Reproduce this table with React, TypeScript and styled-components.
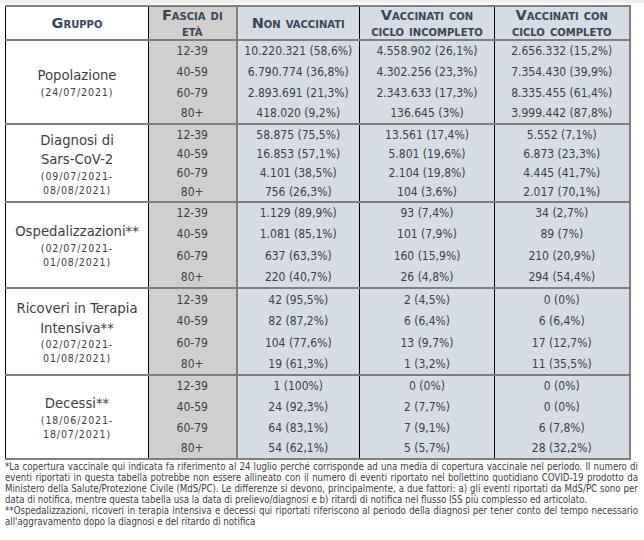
import React from 'react';
import styled, { createGlobalStyle } from 'styled-components';

const Global = createGlobalStyle`
  html, body { margin: 0; padding: 0; background: #ffffff; }
  body { font-family: "DejaVu Sans Condensed", "DejaVu Sans", sans-serif; color: #3e4044; }
`;

const Page = styled.div`
  width: 644px;
  height: 540px;
  overflow: hidden;
  display: flex;
  flex-direction: column;
`;

const TopStrip = styled.div`
  height: 3px;
  background: #efefef;
`;

const Content = styled.div`
  padding: 2px 0 0 5px;
  display: flex;
  flex-direction: column;
`;

const Table = styled.table`
  border-collapse: collapse;
  table-layout: fixed;
  width: 624px;
  border-top: 2px solid #7f7f7f;
  border-left: 1px solid #000000;
  border-right: 2px solid #7f7f7f;
  border-bottom: 2px solid #7f7f7f;
`;

type Kind = 'group' | 'age' | 'value' | 'last';

const bgOf = (k: Kind) => (k === 'group' ? '#ffffff' : k === 'age' ? '#d0cecf' : '#d6dce4');
const rightOf = (k: Kind) =>
  k === 'age' ? '2px solid #7f7f7f' : k === 'last' ? 'none' : '1px solid #000000';

const HeadCell = styled.th<{ $kind: Kind }>`
  background: ${(p) => bgOf(p.$kind)};
  border-right: ${(p) => rightOf(p.$kind)};
  border-bottom: 2px solid #7f7f7f;
  font-family: "DejaVu Sans", sans-serif;
  font-weight: bold;
  font-variant: small-caps;
  font-size: 14.5px;
  line-height: 16px;
  color: #3a4756;
  text-align: center;
  vertical-align: middle;
  padding: 0;
  height: 32px;
`;

const GroupBody = styled.tbody`
  border-top: 2px solid #7f7f7f;
`;

const Row = styled.tr<{ $h: number }>`
  height: ${(p) => p.$h}px;
`;

const LabelCell = styled.td`
  background: #ffffff;
  border-right: 1px solid #000000;
  text-align: center;
  vertical-align: middle;
  padding: 0 3px;
`;

const Title = styled.div`
  font-size: 14.7px;
  line-height: 19.5px;
  color: #3e4044;
`;

const Dates = styled.div`
  font-size: 10.5px;
  line-height: 14px;
  letter-spacing: 0.9px;
  color: #3e4044;
`;

const DataCell = styled.td<{ $kind: Kind }>`
  background: ${(p) => bgOf(p.$kind)};
  border-right: ${(p) => rightOf(p.$kind)};
  font-size: 12px;
  line-height: 14px;
  text-align: center;
  vertical-align: middle;
  padding: 0;
  white-space: nowrap;
  color: #3e4044;
`;

const Notes = styled.div`
  width: 633px;
  padding-top: 1px;
  font-size: 9.6px;
  line-height: 11px;
  color: #3e4044;
`;

const JustLine = styled.div`
  display: flex;
  justify-content: space-between;
  white-space: nowrap;
`;

const PlainLine = styled.div`
  white-space: nowrap;
`;

type Group = {
  title: string[];
  dates: string[];
  heights: number[];
  rows: string[][];
};

const groups: Group[] = [
  {
    title: ['Popolazione'],
    dates: ['(24/07/2021)'],
    heights: [21, 21, 21, 21],
    rows: [
      ['12-39', '10.220.321 (58,6%)', '4.558.902 (26,1%)', '2.656.332 (15,2%)'],
      ['40-59', '6.790.774 (36,8%)', '4.302.256 (23,3%)', '7.354.430 (39,9%)'],
      ['60-79', '2.893.691 (21,3%)', '2.343.633 (17,3%)', '8.335.455 (61,4%)'],
      ['80+', '418.020 (9,2%)', '136.645 (3%)', '3.999.442 (87,8%)'],
    ],
  },
  {
    title: ['Diagnosi di', 'Sars-CoV-2'],
    dates: ['(09/07/2021-', '08/08/2021)'],
    heights: [20, 19, 20, 19],
    rows: [
      ['12-39', '58.875 (75,5%)', '13.561 (17,4%)', '5.552 (7,1%)'],
      ['40-59', '16.853 (57,1%)', '5.801 (19,6%)', '6.873 (23,3%)'],
      ['60-79', '4.101 (38,5%)', '2.104 (19,8%)', '4.445 (41,7%)'],
      ['80+', '756 (26,3%)', '104 (3,6%)', '2.017 (70,1%)'],
    ],
  },
  {
    title: ['Ospedalizzazioni**'],
    dates: ['(02/07/2021-', '01/08/2021)'],
    heights: [21, 22, 21, 22],
    rows: [
      ['12-39', '1.129 (89,9%)', '93 (7,4%)', '34 (2,7%)'],
      ['40-59', '1.081 (85,1%)', '101 (7,9%)', '89 (7%)'],
      ['60-79', '637 (63,3%)', '160 (15,9%)', '210 (20,9%)'],
      ['80+', '220 (40,7%)', '26 (4,8%)', '294 (54,4%)'],
    ],
  },
  {
    title: ['Ricoveri in Terapia', 'Intensiva**'],
    dates: ['(02/07/2021-', '01/08/2021)'],
    heights: [22, 22, 21, 22],
    rows: [
      ['12-39', '42 (95,5%)', '2 (4,5%)', '0 (0%)'],
      ['40-59', '82 (87,2%)', '6 (6,4%)', '6 (6,4%)'],
      ['60-79', '104 (77,6%)', '13 (9,7%)', '17 (12,7%)'],
      ['80+', '19 (61,3%)', '1 (3,2%)', '11 (35,5%)'],
    ],
  },
  {
    title: ['Decessi**'],
    dates: ['(18/06/2021-', '18/07/2021)'],
    heights: [21, 21, 21, 21],
    rows: [
      ['12-39', '1 (100%)', '0 (0%)', '0 (0%)'],
      ['40-59', '24 (92,3%)', '2 (7,7%)', '0 (0%)'],
      ['60-79', '64 (83,1%)', '7 (9,1%)', '6 (7,8%)'],
      ['80+', '54 (62,1%)', '5 (5,7%)', '28 (32,2%)'],
    ],
  },
];

const notes: { text: string; justify: boolean }[] = [
  {
    text: '*La copertura vaccinale qui indicata fa riferimento al 24 luglio perché corrisponde ad una media di copertura vaccinale nel periodo. Il numero di',
    justify: true,
  },
  {
    text: 'eventi riportati in questa tabella potrebbe non essere allineato con il numero di eventi riportato nel bollettino quotidiano COVID-19 prodotto da',
    justify: true,
  },
  {
    text: 'Ministero della Salute/Protezione Civile (MdS/PC). Le differenze si devono, principalmente, a due fattori: a) gli eventi riportati da MdS/PC sono per',
    justify: true,
  },
  {
    text: 'data di notifica, mentre questa tabella usa la data di prelievo/diagnosi e b) ritardi di notifica nel flusso ISS più complesso ed articolato.',
    justify: false,
  },
  {
    text: '**Ospedalizzazioni, ricoveri in terapia intensiva e decessi qui riportati riferiscono al periodo della diagnosi per tener conto del tempo necessario',
    justify: true,
  },
  {
    text: "all'aggravamento dopo la diagnosi e del ritardo di notifica",
    justify: false,
  },
];

const valueKinds: Kind[] = ['age', 'value', 'value', 'last'];

export default function App() {
  return (
    <Page>
      <Global />
      <TopStrip />
      <Content>
        <Table>
          <colgroup>
            <col style={{ width: 143 }} />
            <col style={{ width: 88 }} />
            <col style={{ width: 123 }} />
            <col style={{ width: 135 }} />
            <col style={{ width: 135 }} />
          </colgroup>
          <thead>
            <tr>
              <HeadCell $kind="group">Gruppo</HeadCell>
              <HeadCell $kind="age">
                Fascia di
                <br />
                età
              </HeadCell>
              <HeadCell $kind="value">Non vaccinati</HeadCell>
              <HeadCell $kind="value">
                Vaccinati con
                <br />
                ciclo incompleto
              </HeadCell>
              <HeadCell $kind="last">
                Vaccinati con
                <br />
                ciclo completo
              </HeadCell>
            </tr>
          </thead>
          {groups.map((g, gi) => (
            <GroupBody key={gi}>
              {g.rows.map((r, ri) => (
                <Row key={ri} $h={g.heights[ri]}>
                  {ri === 0 && (
                    <LabelCell rowSpan={4}>
                      {g.title.map((t) => (
                        <Title key={t}>{t}</Title>
                      ))}
                      {g.dates.map((d) => (
                        <Dates key={d}>{d}</Dates>
                      ))}
                    </LabelCell>
                  )}
                  {r.map((v, vi) => (
                    <DataCell key={vi} $kind={valueKinds[vi]}>
                      {v}
                    </DataCell>
                  ))}
                </Row>
              ))}
            </GroupBody>
          ))}
        </Table>
        <Notes>
          {notes.map((n, i) =>
            n.justify ? (
              <JustLine key={i}>
                {n.text.split(' ').map((w, wi) => (
                  <span key={wi}>{w}</span>
                ))}
              </JustLine>
            ) : (
              <PlainLine key={i}>{n.text}</PlainLine>
            )
          )}
        </Notes>
      </Content>
    </Page>
  );
}
